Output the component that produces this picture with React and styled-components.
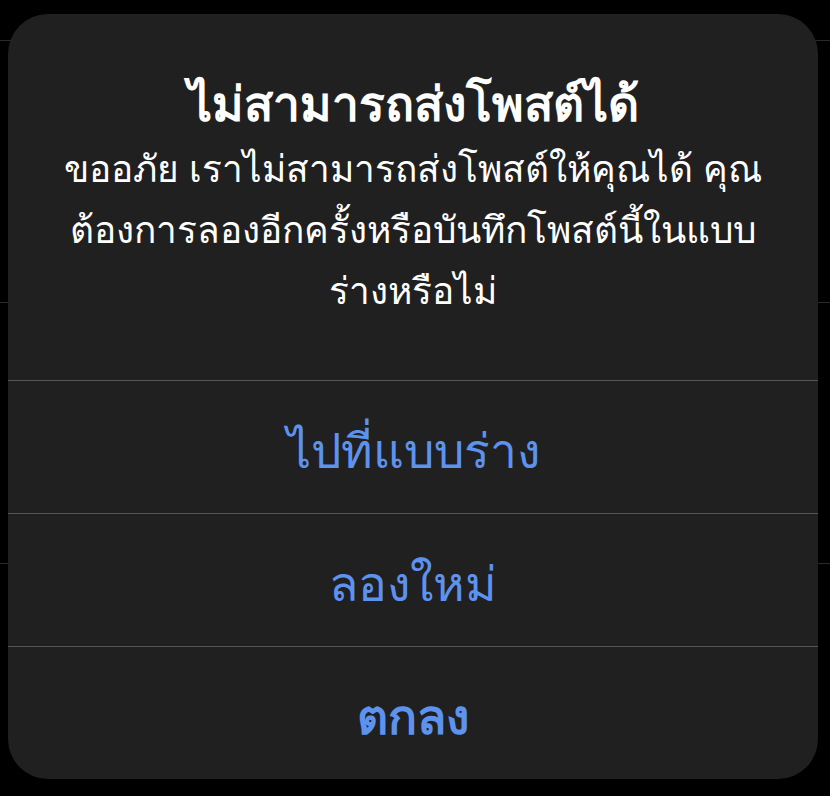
import React from 'react'
import styled, { createGlobalStyle } from 'styled-components'

const Global = createGlobalStyle`
  body {
    margin: 0;
    background: #000;
    font-family: "Liberation Sans", sans-serif;
  }
`

const Screen = styled.div`
  position: relative;
  width: 830px;
  height: 796px;
  overflow: hidden;
  background: #000;
`

// rows of the page lying under the alert
const Backdrop = styled.div`
  display: flex;
  flex-direction: column;
`

const BackRow = styled.div`
  height: ${p => p.$h}px;
  border-bottom: 1px solid #2a2a2a;
`

const Alert = styled.div`
  position: absolute;
  left: 8px;
  top: 14px;
  width: 810px;
  height: 765px;
  border-radius: 40px;
  background: #202020;
  overflow: hidden;
  display: flex;
  flex-direction: column;
`

const Header = styled.div`
  height: 366px;
  box-sizing: border-box;
  padding-top: 59px;
  display: flex;
  flex-direction: column;
  align-items: center;
  color: #fff;
  text-align: center;
`

const Title = styled.div`
  font-size: 48px;
  font-weight: 700;
  line-height: 64px;
  white-space: nowrap;
`

const Message = styled.div`
  font-size: 37px;
  line-height: 61px;
  padding-top: 2px;
  white-space: nowrap;
`

const Action = styled.button`
  flex: 1;
  display: flex;
  align-items: center;
  justify-content: center;
  border: 0;
  border-top: 1px solid #555;
  background: transparent;
  color: #5e92ef;
  font-family: inherit;
  font-size: 48px;
  font-weight: ${p => (p.$bold ? 700 : 400)};
  padding: 8px 0 0;
  margin: 0;
`

export default function App() {
  return (
    <Screen>
      <Global />
      <Backdrop>
        <BackRow $h={40} />
        <BackRow $h={261} />
        <BackRow $h={260} />
      </Backdrop>
      <Alert>
        <Header>
          <Title>ไม่สามารถส่งโพสต์ได้</Title>
          <Message>
            ขออภัย เราไม่สามารถส่งโพสต์ให้คุณได้ คุณ
            <br />
            ต้องการลองอีกครั้งหรือบันทึกโพสต์นี้ในแบบ
            <br />
            ร่างหรือไม่
          </Message>
        </Header>
        <Action>ไปที่แบบร่าง</Action>
        <Action>ลองใหม่</Action>
        <Action $bold>ตกลง</Action>
      </Alert>
    </Screen>
  )
}
